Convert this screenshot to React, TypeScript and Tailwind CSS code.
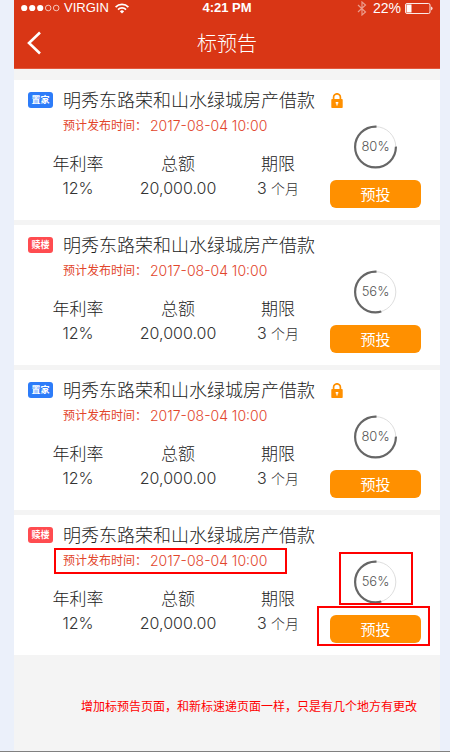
import type { ReactNode } from "react";

type Loan = {
  id: number;
  tag: string;
  tone: "blue" | "red";
  locked: boolean;
  percent: number;
  arc: number;
  marked: boolean;
};

const loans: Loan[] = [
  { id: 1, tag: "置家", tone: "blue", locked: true, percent: 80, arc: 75.5, marked: false },
  { id: 2, tag: "赎楼", tone: "red", locked: false, percent: 56, arc: 55, marked: false },
  { id: 3, tag: "置家", tone: "blue", locked: true, percent: 80, arc: 75.5, marked: false },
  { id: 4, tag: "赎楼", tone: "red", locked: false, percent: 56, arc: 55, marked: true },
];

const stats = [
  { label: "年利率", value: "12%" },
  { label: "总额", value: "20,000.00" },
];

function StatusBar() {
  return (
    <div className="grid h-4 grid-cols-[1fr_auto_1fr] items-center px-[7px] font-['Liberation_Sans','Noto_Sans_CJK_SC',sans-serif] text-[13px] leading-4">
      <div className="flex items-center">
        <svg width="39" height="8" viewBox="0 0 39 8" fill="white" aria-hidden="true">
          <circle cx="3.2" cy="4" r="3.1" />
          <circle cx="11.2" cy="4" r="3.1" />
          <circle cx="19.2" cy="4" r="3.1" />
          <g fill="none" stroke="white" strokeWidth="0.7">
            <circle cx="27.2" cy="4" r="2.8" />
            <circle cx="35.2" cy="4" r="2.8" />
          </g>
        </svg>
        <span className="ml-1">VIRGIN</span>
        <svg className="ml-1.5" width="14" height="11" viewBox="0 0 14 11" fill="none" stroke="white" strokeWidth="1.7" aria-hidden="true">
          <path d="M0.6 4.1a9 9 0 0 1 12.8 0" />
          <path d="M3 6.6a5.7 5.7 0 0 1 8 0" />
          <path d="M7 10.6 4.9 8.4a3 3 0 0 1 4.2 0z" fill="white" stroke="none" />
        </svg>
      </div>
      <span className="font-bold">4:21 PM</span>
      <div className="flex items-center justify-end">
        <svg width="10" height="15" viewBox="0 0 10 15" fill="none" stroke="white" strokeOpacity="0.5" strokeWidth="1.2" aria-hidden="true">
          <path d="M1 4l7.5 7L5 14V1l3.5 3L1 11" />
        </svg>
        <span className="ml-1.5 text-sm leading-4">22%</span>
        <svg className="ml-1" width="28" height="11" viewBox="0 0 28 11" aria-hidden="true">
          <rect x="0.5" y="0.5" width="24.5" height="10" rx="1.5" fill="none" stroke="white" strokeWidth="0.9" />
          <rect x="1.5" y="1.5" width="5" height="8" fill="white" />
          <path d="M26.2 3.6c1.8.5 1.8 3.3 0 3.8z" fill="white" />
        </svg>
      </div>
    </div>
  );
}

function Lock() {
  return (
    <svg width="12" height="15" viewBox="0 0 12 15" role="img" aria-label="已锁定">
      <path d="M2.6 7V4.2a3.4 3.4 0 0 1 6.8 0V7" fill="none" stroke="#ff9000" strokeWidth="1.7" />
      <rect x="0.3" y="6" width="11.4" height="9" rx="0.8" fill="#ff9000" />
      <path d="M4.7 9h2.6v1.4h-.7v2.2H5.4v-2.2h-.7z" fill="white" />
    </svg>
  );
}

function Ring({ percent, arc }: { percent: number; arc: number }) {
  return (
    <div className="grid size-11 place-items-center">
      <svg className="col-start-1 row-start-1" width="44" height="44" viewBox="0 0 44 44" fill="none" aria-hidden="true">
        <circle cx="21.5" cy="22" r="20.3" stroke="#dedede" />
        <path
          d="M22.5 1.6H21.5a20.4 20.4 0 1 0 0 40.8a20.4 20.4 0 1 0 0-40.8"
          stroke="#666"
          strokeWidth="2.2"
          pathLength={100}
          strokeDasharray={`${arc} 100`}
        />
      </svg>
      <span className="col-start-1 row-start-1 font-['Inter',sans-serif] text-[13px] font-light text-[#555]">{percent}%</span>
    </div>
  );
}

function Marked({ on, frame, children }: { on: boolean; frame: string; children: ReactNode }) {
  return (
    <div className="relative">
      {children}
      {on && <span className={`pointer-events-none absolute border-2 border-[#f00] ${frame}`} />}
    </div>
  );
}

function LoanCard({ loan }: { loan: Loan }) {
  return (
    <li className="bg-white pt-2 pb-3">
      <div className="flex h-6 items-center pl-3.5">
        <span
          className={`h-4 w-[25px] rounded-[3px] text-center text-[9px] leading-4 font-bold text-white ${
            loan.tone === "blue" ? "bg-[#2d7cf9]" : "bg-[#ff4c50]"
          }`}
        >
          {loan.tag}
        </span>
        <h2 className="ml-2.5 text-lg leading-6 font-light text-[#222]">明秀东路荣和山水绿城房产借款</h2>
        {loan.locked && (
          <span className="ml-4">
            <Lock />
          </span>
        )}
      </div>
      <div className="mt-1 flex pr-[19px] pl-3.5">
        <div className="flex-1">
          <div className="flex pl-[35px]">
            <Marked on={loan.marked} frame="-left-[9px] -right-5 -top-[3px] -bottom-[3px]">
              <p className="flex items-center gap-[3px] text-[#e2452b]">
                <span className="text-xs leading-5">预计发布时间：</span>
                <time className="font-['Inter',sans-serif] text-sm leading-5 font-light">2017-08-04 10:00</time>
              </p>
            </Marked>
          </div>
          <dl className="mt-4 grid grid-cols-3 text-center leading-6">
            {stats.map((s) => (
              <div key={s.label}>
                <dt className="text-[17px] leading-6 font-light text-[#222]">{s.label}</dt>
                <dd className="font-['Inter',sans-serif] text-base leading-6 font-light text-[#333]">{s.value}</dd>
              </div>
            ))}
            <div>
              <dt className="text-[17px] leading-6 font-light text-[#222]">期限</dt>
              <dd className="font-['Inter','Noto_Sans_CJK_SC',sans-serif] text-base leading-6 font-light text-[#333]">
                3 <span className="text-sm">个月</span>
              </dd>
            </div>
          </dl>
        </div>
        <div className="ml-0.5 flex w-[91px] flex-col items-stretch pt-[9px]">
          <Marked on={loan.marked} frame="left-[9px] right-2 -top-2 -bottom-[1px]">
            <div className="flex justify-center">
              <Ring percent={loan.percent} arc={loan.arc} />
            </div>
          </Marked>
          <div className="mt-[11px]">
            <Marked on={loan.marked} frame="-left-[13px] -right-[9px] -top-[9px] -bottom-[3px]">
              <button type="button" className="block h-7 w-full rounded-md bg-[#ff9000] text-[15px] leading-7 text-white">
                预投
              </button>
            </Marked>
          </div>
        </div>
      </div>
    </li>
  );
}

export default function App() {
  return (
    <div className="bg-white">
      <div className="border-b border-[#808080] bg-[#ebf0fa] pr-2.5 pl-3.5 font-['Lato','Noto_Sans_CJK_SC',sans-serif] text-[#333]">
        <div className="bg-[#f4f4f4]">
          <header className="border-b border-[#e2583c] bg-[#d93615] text-white">
            <StatusBar />
            <div className="grid h-[52px] grid-cols-[1fr_auto_1fr] items-center pt-0.5">
              <button type="button" aria-label="返回" className="ml-3 w-4">
                <svg width="16" height="24" viewBox="0 0 16 24" fill="none" stroke="white" strokeWidth="2.6">
                  <path d="M14 1.5 3 12l11 10.5" />
                </svg>
              </button>
              <h1 className="text-xl leading-7 font-light">标预告</h1>
            </div>
          </header>
          <main className="pt-[11px]">
            <ul className="flex flex-col gap-[5px]">
              {loans.map((loan) => (
                <LoanCard key={loan.id} loan={loan} />
              ))}
            </ul>
            <p className="pt-[42px] pb-[34px] pl-[67px] text-xs leading-5 text-[#f00]">
              增加标预告页面，和新标速递页面一样，只是有几个地方有更改
            </p>
          </main>
        </div>
      </div>
    </div>
  );
}
